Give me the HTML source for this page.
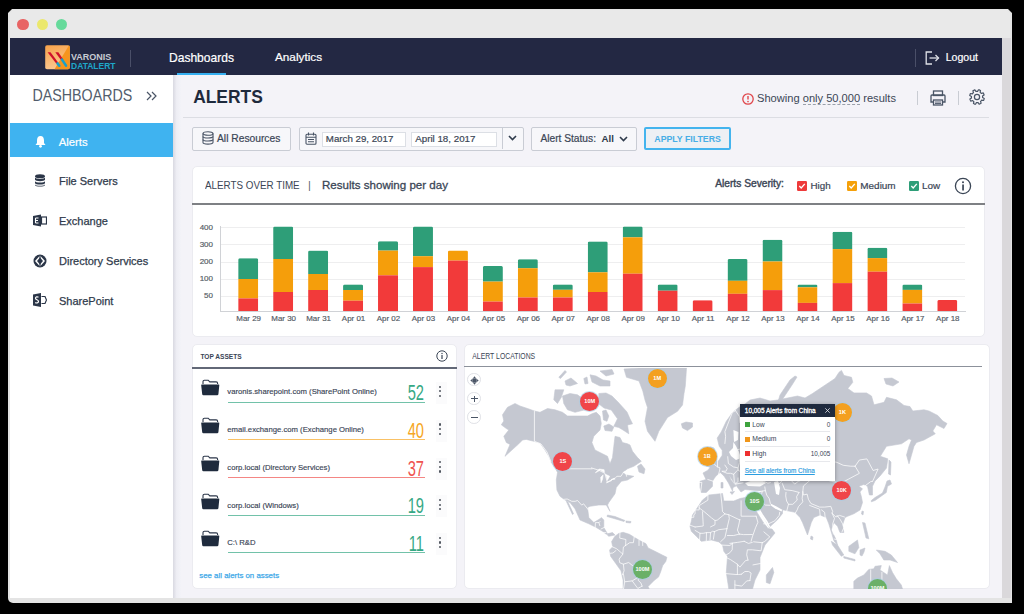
<!DOCTYPE html>
<html><head><meta charset="utf-8"><style>
html,body{margin:0;padding:0;}
body{width:1024px;height:614px;background:#000;position:relative;overflow:hidden;font-family:"Liberation Sans", sans-serif;}
.a{position:absolute;}
.t{position:absolute;white-space:nowrap;}
</style></head><body>
<div class="a" style="left:8px;top:9px;width:1004px;height:594px;background:#e4e4e4;border-radius:0 0 0 5px;clip-path:polygon(4px 0,1000px 0,1004px 4px,1004px 594px,0 594px,0 4px);"></div><div class="a" style="left:1002px;top:38px;width:9px;height:560px;background:#dad8db;"></div><div class="a" style="left:10px;top:10px;width:1000px;height:28px;background:#e9e9e9;clip-path:polygon(3px 0,997px 0,1000px 3px,1000px 28px,0 28px,0 3px);"></div><div class="a" style="left:17.4px;top:18.8px;width:11.6px;height:11.6px;border-radius:50%;background:#e86464;"></div><div class="a" style="left:36.6px;top:18.8px;width:11.6px;height:11.6px;border-radius:50%;background:#ebe86c;"></div><div class="a" style="left:55.7px;top:18.8px;width:11.6px;height:11.6px;border-radius:50%;background:#66da9b;"></div><div class="a" style="left:10px;top:38px;width:992px;height:37px;background:#232843;"></div><div class="a" style="left:10px;top:75px;width:992px;height:523px;background:#f4f3f8;"></div><div class="a" style="left:10px;top:75px;width:163px;height:523px;background:#ffffff;"></div><div class="a" style="left:173px;top:75px;width:8px;height:523px;background:linear-gradient(90deg,#d9d9e1,#eeeef4 45%,#f3f3f8);"></div><svg class="a" style="left:45px;top:45px" width="25" height="25" viewBox="0 0 25 25">
<defs><linearGradient id="lg" x1="0" y1="0" x2="0.3" y2="1"><stop offset="0" stop-color="#f7a24a"/><stop offset="1" stop-color="#fbc78e"/></linearGradient></defs>
<rect x="0.2" y="0.2" width="24.6" height="24" rx="1.8" fill="url(#lg)"/>
<path d="M23.9 0.5 L24.8 1.5 L24.8 22.5 Q24.8 24.2 23 24.2 L9.5 24.2 Z" fill="#f6951e"/>
<path d="M2.6 7.2 L5.5 7.2 L13.9 18.4 L11.2 18.4 Z" fill="#d0102a"/>
<path d="M10.3 7.2 L13.3 7.2 L18.4 14.5 L15.6 14.5 Z" fill="#d0102a"/>
<path d="M12.5 18.4 L14.3 20.7" stroke="#1ba0c8" stroke-width="2.6" stroke-linecap="round"/>
<path d="M17.0 14.6 L21.0 20.6" stroke="#1ba0c8" stroke-width="2.6" stroke-linecap="round"/>
</svg><div class="t " style="left:71.00px;top:52.98px;font-size:9.0px;line-height:9.0px;color:#c9cbd3;font-weight:bold;letter-spacing:0px;">VARONIS</div><div class="t " style="left:71.00px;top:61.80px;font-size:8.5px;line-height:8.5px;color:#1ea7c9;font-weight:bold;">DATALERT</div><div class="a" style="left:130px;top:50px;width:1px;height:17px;background:#4a4f68;"></div><div class="t " style="left:169.00px;top:51.79px;font-size:12.06px;line-height:12.06px;color:#ffffff;font-weight:normal;-webkit-text-stroke:0.2px #fff;">Dashboards</div><div class="a" style="left:177px;top:72.5px;width:49px;height:2.5px;background:#35aff0;"></div><div class="t " style="left:275.00px;top:51.25px;font-size:11.75px;line-height:11.75px;color:#ffffff;font-weight:normal;-webkit-text-stroke:0.2px #fff;">Analytics</div><div class="a" style="left:915px;top:49px;width:1px;height:18px;background:#4a4f68;"></div><svg class="a" style="left:925px;top:51px" width="15" height="14" viewBox="0 0 15 14" fill="none" stroke="#dfe1e8" stroke-width="1.3">
<path d="M7 1 H1.2 V13 H7"/><path d="M4.5 7 H13.5"/><path d="M10.5 4 L13.5 7 L10.5 10"/></svg><div class="t " style="left:945.70px;top:52.36px;font-size:10.56px;line-height:10.56px;color:#ffffff;font-weight:normal;-webkit-text-stroke:0.2px #fff;">Logout</div><div class="t " style="left:32.40px;top:89.41px;font-size:14.28px;line-height:14.28px;color:#525d6c;font-weight:normal;transform:scaleY(1.12);transform-origin:0 100%;">DASHBOARDS</div><svg class="a" style="left:146px;top:91px" width="11" height="10" viewBox="0 0 11 10" fill="none" stroke="#4a5566" stroke-width="1.2">
<path d="M1 1 L5 5 L1 9"/><path d="M6 1 L10 5 L6 9"/></svg><div class="a" style="left:10px;top:123px;width:163px;height:34px;background:#3fb3f0;"></div><svg class="a" style="left:34px;top:135px" width="13" height="13" viewBox="0 0 13 13"><path d="M6.5 1 C4 1 3 3 3 5.5 L3 8 L1.5 10 L11.5 10 L10 8 L10 5.5 C10 3 9 1 6.5 1 Z" fill="#fff"/><circle cx="6.5" cy="11.3" r="1.4" fill="#fff"/></svg><div class="t " style="left:58.70px;top:136.80px;font-size:11.34px;line-height:11.34px;color:#ffffff;font-weight:normal;-webkit-text-stroke:0.2px #fff;">Alerts</div><div class="t " style="left:59.00px;top:176.49px;font-size:11.0px;line-height:11.0px;color:#2f3b4c;font-weight:normal;-webkit-text-stroke:0.25px #2f3b4c;">File Servers</div><div class="t " style="left:59.00px;top:216.29px;font-size:11.0px;line-height:11.0px;color:#2f3b4c;font-weight:normal;-webkit-text-stroke:0.25px #2f3b4c;">Exchange</div><div class="t " style="left:59.00px;top:255.89px;font-size:11.0px;line-height:11.0px;color:#2f3b4c;font-weight:normal;-webkit-text-stroke:0.25px #2f3b4c;">Directory Services</div><div class="t " style="left:59.00px;top:295.69px;font-size:11.0px;line-height:11.0px;color:#2f3b4c;font-weight:normal;-webkit-text-stroke:0.25px #2f3b4c;">SharePoint</div><svg class="a" style="left:34px;top:174px" width="12" height="13" viewBox="0 0 12 13" fill="#2b3648">
<ellipse cx="6" cy="2.3" rx="5" ry="2"/><path d="M1 3.6 C1 5.5 11 5.5 11 3.6 V5.8 C11 7.6 1 7.6 1 5.8Z"/><path d="M1 7 C1 9 11 9 11 7 V9 C11 11 1 11 1 9Z"/><path d="M1 10.2 C1 12.2 11 12.2 11 10.2 V11 C11 13 1 13 1 11Z"/></svg><svg class="a" style="left:33px;top:214px" width="14" height="13" viewBox="0 0 14 13">
<path d="M0 2 L8 0.5 V12.5 L0 11 Z" fill="#2b3648"/><rect x="8.5" y="3" width="5" height="7" fill="none" stroke="#2b3648" stroke-width="1.2"/>
<path d="M2.5 4 H5.5 M2.5 6.5 H5 M2.5 9 H5.5 M2.5 4 V9" stroke="#fff" stroke-width="1.1"/></svg><svg class="a" style="left:33px;top:254px" width="14" height="14" viewBox="0 0 14 14">
<circle cx="7" cy="7" r="6.5" fill="#2b3648"/><path d="M7 1.5 L12 7 L7 12.5 L2 7 Z" fill="#fff"/><path d="M7 3.5 L10 7 L7 10.5 L4 7 Z" fill="#2b3648"/><path d="M7 1.5 V12.5" stroke="#2b3648" stroke-width="1.2"/></svg><svg class="a" style="left:33px;top:293px" width="14" height="14" viewBox="0 0 14 14">
<path d="M0 1.5 L8 0 V14 L0 12.5 Z" fill="#2b3648"/><path d="M8.5 3.5 L12 3.5 L13.5 7 L12 10.5 L8.5 10.5" fill="none" stroke="#2b3648" stroke-width="1.2"/>
<path d="M5.5 4.2 C4.5 3.5 2.5 3.6 2.5 5.2 C2.5 7 5.5 6.6 5.5 8.6 C5.5 10.2 3.3 10.3 2.3 9.5" fill="none" stroke="#fff" stroke-width="1.2"/></svg><div class="t " style="left:193.20px;top:89.07px;font-size:17.4px;line-height:17.4px;color:#1e2a3c;font-weight:bold;transform:scaleY(1.1);transform-origin:0 100%;">ALERTS</div><div class="a" style="left:183px;top:117px;width:806px;height:1px;background:#dcdde3;"></div><svg class="a" style="left:741.5px;top:92.5px" width="12" height="12" viewBox="0 0 12 12"><circle cx="6" cy="6" r="5.2" fill="none" stroke="#e0454a" stroke-width="1.3"/><path d="M6 3 V6.6" stroke="#e0454a" stroke-width="1.4"/><circle cx="6" cy="8.6" r="0.8" fill="#e0454a"/></svg><div class="t " style="left:757.00px;top:93.00px;font-size:11.11px;line-height:11.11px;color:#3b4656;font-weight:normal;">Showing <span style="border-bottom:1px dashed #9aa0aa">only 50,000</span> results</div><div class="a" style="left:917px;top:91px;width:1px;height:14px;background:#c9ccd3;"></div><svg class="a" style="left:930px;top:89.5px" width="16" height="16" viewBox="0 0 16 16" fill="none" stroke="#4a5566" stroke-width="1.3">
<rect x="3.5" y="1" width="9" height="4.5"/><path d="M3 12 H1 V6 Q1 5 2 5 H14 Q15 5 15 6 V12 H13"/><rect x="3.5" y="10" width="9" height="5"/><path d="M5 12 H11 M5 13.5 H11" stroke-width="0.9"/></svg><div class="a" style="left:958px;top:91px;width:1px;height:14px;background:#c9ccd3;"></div><svg class="a" style="left:969px;top:89px" width="16" height="16" viewBox="0 0 16 16" fill="none" stroke="#4a5566" stroke-width="1.2" stroke-linejoin="round">
<path d="M15.25 9.47 L15.07 10.17 L14.83 10.86 L14.51 11.51 L12.64 11.13 L12.32 11.57 L11.95 11.97 L11.54 12.34 L12.09 14.17 L11.46 14.54 L10.81 14.85 L10.12 15.09 L9.07 13.50 L8.53 13.58 L7.98 13.60 L7.43 13.57 L6.53 15.25 L5.83 15.07 L5.14 14.83 L4.49 14.51 L4.87 12.64 L4.43 12.32 L4.03 11.95 L3.66 11.54 L1.83 12.09 L1.46 11.46 L1.15 10.81 L0.91 10.12 L2.50 9.07 L2.42 8.53 L2.40 7.98 L2.43 7.43 L0.75 6.53 L0.93 5.83 L1.17 5.14 L1.49 4.49 L3.36 4.87 L3.68 4.43 L4.05 4.03 L4.46 3.66 L3.91 1.83 L4.54 1.46 L5.19 1.15 L5.88 0.91 L6.93 2.50 L7.47 2.42 L8.02 2.40 L8.57 2.43 L9.47 0.75 L10.17 0.93 L10.86 1.17 L11.51 1.49 L11.13 3.36 L11.57 3.68 L11.97 4.05 L12.34 4.46 L14.17 3.91 L14.54 4.54 L14.85 5.19 L15.09 5.88 L13.50 6.93 L13.58 7.47 L13.60 8.02 L13.57 8.57Z"/><circle cx="8" cy="8" r="2.6"/></svg><div class="a" style="left:191.5px;top:126.5px;width:97px;height:22px;border:1px solid #c9ccd4;background:#f7f7fa;border-radius:2px;"></div><svg class="a" style="left:202px;top:131px" width="12" height="14" viewBox="0 0 12 14" fill="none" stroke="#4a5566" stroke-width="1.1">
<ellipse cx="6" cy="2.5" rx="5" ry="1.8"/><path d="M1 2.5 V11.5 C1 13.6 11 13.6 11 11.5 V2.5"/><path d="M1 5.5 C1 7.5 11 7.5 11 5.5 M1 8.5 C1 10.5 11 10.5 11 8.5"/></svg><div class="t " style="left:217.00px;top:133.90px;font-size:10.28px;line-height:10.28px;color:#3b4656;font-weight:normal;-webkit-text-stroke:0.2px #3b4656;">All Resources</div><div class="a" style="left:298.5px;top:126.5px;width:223px;height:22px;border:1px solid #c9ccd4;background:#f7f7fa;border-radius:2px;"></div><svg class="a" style="left:305px;top:131.5px" width="12" height="13" viewBox="0 0 12 13" fill="none" stroke="#4a5566" stroke-width="1.1">
<rect x="1" y="2.2" width="10" height="10" rx="1"/><path d="M1 5.2 H11 M3.5 0.5 V3.5 M8.5 0.5 V3.5 M3 7.5 H9 M3 9.7 H9" /></svg><div class="a" style="left:321.5px;top:131.5px;width:82px;height:13px;border:1px solid #dcdfe5;background:#fff;"></div><div class="t " style="left:325.80px;top:134.16px;font-size:9.73px;line-height:9.73px;color:#3b4656;font-weight:normal;-webkit-text-stroke:0.2px #3b4656;">March 29, 2017</div><div class="a" style="left:411px;top:131.5px;width:84px;height:13px;border:1px solid #dcdfe5;background:#fff;"></div><div class="t " style="left:415.20px;top:134.13px;font-size:9.77px;line-height:9.77px;color:#3b4656;font-weight:normal;-webkit-text-stroke:0.2px #3b4656;">April 18, 2017</div><div class="a" style="left:502px;top:127px;width:1px;height:22px;background:#c9ccd4;"></div><svg class="a" style="left:507.5px;top:135px" width="9" height="6" viewBox="0 0 9 6" fill="none" stroke="#2f3b4c" stroke-width="1.6"><path d="M1 1 L4.5 4.5 L8 1"/></svg><div class="a" style="left:531px;top:126.5px;width:104px;height:22px;border:1px solid #c9ccd4;background:#f7f7fa;border-radius:2px;"></div><div class="t " style="left:540.40px;top:133.96px;font-size:10.21px;line-height:10.21px;color:#3b4656;font-weight:normal;-webkit-text-stroke:0.2px #3b4656;">Alert Status:</div><div class="t " style="left:601.60px;top:134.39px;font-size:9.7px;line-height:9.7px;color:#2f3b4c;font-weight:bold;">All</div><svg class="a" style="left:619px;top:135.5px" width="9" height="6" viewBox="0 0 9 6" fill="none" stroke="#2f3b4c" stroke-width="1.6"><path d="M1 1 L4.5 4.5 L8 1"/></svg><div class="a" style="left:644px;top:126.5px;width:83px;height:19px;border:2px solid #44b4ee;background:#edf0f4;border-radius:2px;"></div><div class="t " style="left:654.30px;top:135.17px;font-size:8.78px;line-height:8.78px;color:#47ade6;font-weight:bold;transform:scaleY(1.13);transform-origin:0 100%;">APPLY FILTERS</div><div class="a" style="left:191.5px;top:165.5px;width:793px;height:171px;border:1px solid #ebebf0;background:#fff;border-radius:5px;box-sizing:border-box;"></div><div class="t " style="left:205.00px;top:181.08px;font-size:9.83px;line-height:9.83px;color:#3b4656;font-weight:normal;transform:scaleY(1.2);transform-origin:0 100%;">ALERTS OVER TIME</div><div class="t " style="left:308.00px;top:180.09px;font-size:11px;line-height:11px;color:#5a6270;font-weight:normal;">|</div><div class="t " style="left:322.00px;top:179.61px;font-size:11.57px;line-height:11.57px;color:#3b4656;font-weight:normal;-webkit-text-stroke:0.3px #3b4656;">Results showing per day</div><div class="t " style="left:715.20px;top:179.34px;font-size:10.23px;line-height:10.23px;color:#3b4656;font-weight:normal;-webkit-text-stroke:0.4px #3b4656;">Alerts Severity:</div><svg class="a" style="left:796.7px;top:180.5px" width="10" height="10" viewBox="0 0 10 10"><rect x="0" y="0" width="10" height="10" rx="1.2" fill="#ee3a3a"/><path d="M2.3 5 L4.2 7 L7.8 2.8" fill="none" stroke="#fff" stroke-width="1.3"/></svg><svg class="a" style="left:846.5px;top:180.5px" width="10" height="10" viewBox="0 0 10 10"><rect x="0" y="0" width="10" height="10" rx="1.2" fill="#f5a00a"/><path d="M2.3 5 L4.2 7 L7.8 2.8" fill="none" stroke="#fff" stroke-width="1.3"/></svg><svg class="a" style="left:908.6px;top:180.5px" width="10" height="10" viewBox="0 0 10 10"><rect x="0" y="0" width="10" height="10" rx="1.2" fill="#2e9e78"/><path d="M2.3 5 L4.2 7 L7.8 2.8" fill="none" stroke="#fff" stroke-width="1.3"/></svg><div class="t " style="left:810.50px;top:180.70px;font-size:9.8px;line-height:9.8px;color:#3b4656;font-weight:normal;-webkit-text-stroke:0.2px #3b4656;">High</div><div class="t " style="left:860.30px;top:180.58px;font-size:9.95px;line-height:9.95px;color:#3b4656;font-weight:normal;-webkit-text-stroke:0.2px #3b4656;">Medium</div><div class="t " style="left:922.00px;top:180.62px;font-size:9.9px;line-height:9.9px;color:#3b4656;font-weight:normal;-webkit-text-stroke:0.2px #3b4656;">Low</div><svg class="a" style="left:954px;top:177px" width="18" height="18" viewBox="0 0 18 18"><circle cx="9" cy="9" r="7.6" fill="none" stroke="#3b4656" stroke-width="1.3"/><rect x="8.2" y="7.5" width="1.7" height="6" fill="#3b4656"/><circle cx="9" cy="5.2" r="1" fill="#3b4656"/></svg><div class="a" style="left:192px;top:203.2px;width:793px;height:1.7px;background:#7e8084;"></div><div class="a" style="left:221px;top:227px;width:744px;height:1px;background:#eeeeef;"></div><div class="t " style="left:183.00px;width:30px;text-align:right;top:223.83px;font-size:8px;line-height:8px;color:#555c66;font-weight:normal;-webkit-text-stroke:0.18px #555c66;">400</div><div class="a" style="left:221px;top:244px;width:744px;height:1px;background:#eeeeef;"></div><div class="t " style="left:183.00px;width:30px;text-align:right;top:241.13px;font-size:8px;line-height:8px;color:#555c66;font-weight:normal;-webkit-text-stroke:0.18px #555c66;">300</div><div class="a" style="left:221px;top:262px;width:744px;height:1px;background:#eeeeef;"></div><div class="t " style="left:183.00px;width:30px;text-align:right;top:258.33px;font-size:8px;line-height:8px;color:#555c66;font-weight:normal;-webkit-text-stroke:0.18px #555c66;">200</div><div class="a" style="left:221px;top:279px;width:744px;height:1px;background:#eeeeef;"></div><div class="t " style="left:183.00px;width:30px;text-align:right;top:275.43px;font-size:8px;line-height:8px;color:#555c66;font-weight:normal;-webkit-text-stroke:0.18px #555c66;">100</div><div class="a" style="left:221px;top:296px;width:744px;height:1px;background:#eeeeef;"></div><div class="t " style="left:183.00px;width:30px;text-align:right;top:292.43px;font-size:8px;line-height:8px;color:#555c66;font-weight:normal;-webkit-text-stroke:0.18px #555c66;">50</div><div class="a" style="left:220px;top:226px;width:1px;height:86px;background:#d0d2d6;"></div><div class="a" style="left:220px;top:311px;width:746px;height:1px;background:#d0d2d6;"></div><svg class="a" style="left:0;top:0" width="1024" height="614" viewBox="0 0 1024 614"><clipPath id="c0"><rect x="238.20" y="258.20" width="20" height="55.80" rx="1.5"/></clipPath><g clip-path="url(#c0)"><rect x="238.20" y="258.20" width="20" height="20.80" fill="#2e9e78"/><rect x="238.20" y="279.00" width="20" height="19.40" fill="#f59e0b"/><rect x="238.20" y="298.40" width="20" height="12.60" fill="#f23a3a"/></g><clipPath id="c1"><rect x="273.15" y="226.50" width="20" height="87.50" rx="1.5"/></clipPath><g clip-path="url(#c1)"><rect x="273.15" y="226.50" width="20" height="32.50" fill="#2e9e78"/><rect x="273.15" y="259.00" width="20" height="33.00" fill="#f59e0b"/><rect x="273.15" y="292.00" width="20" height="19.00" fill="#f23a3a"/></g><clipPath id="c2"><rect x="308.11" y="250.60" width="20" height="63.40" rx="1.5"/></clipPath><g clip-path="url(#c2)"><rect x="308.11" y="250.60" width="20" height="23.40" fill="#2e9e78"/><rect x="308.11" y="274.00" width="20" height="16.00" fill="#f59e0b"/><rect x="308.11" y="290.00" width="20" height="21.00" fill="#f23a3a"/></g><clipPath id="c3"><rect x="343.06" y="284.40" width="20" height="29.60" rx="1.5"/></clipPath><g clip-path="url(#c3)"><rect x="343.06" y="284.40" width="20" height="5.60" fill="#2e9e78"/><rect x="343.06" y="290.00" width="20" height="10.70" fill="#f59e0b"/><rect x="343.06" y="300.70" width="20" height="10.30" fill="#f23a3a"/></g><clipPath id="c4"><rect x="378.02" y="241.20" width="20" height="72.80" rx="1.5"/></clipPath><g clip-path="url(#c4)"><rect x="378.02" y="241.20" width="20" height="9.40" fill="#2e9e78"/><rect x="378.02" y="250.60" width="20" height="24.70" fill="#f59e0b"/><rect x="378.02" y="275.30" width="20" height="35.70" fill="#f23a3a"/></g><clipPath id="c5"><rect x="412.97" y="226.50" width="20" height="87.50" rx="1.5"/></clipPath><g clip-path="url(#c5)"><rect x="412.97" y="226.50" width="20" height="29.70" fill="#2e9e78"/><rect x="412.97" y="256.20" width="20" height="10.90" fill="#f59e0b"/><rect x="412.97" y="267.10" width="20" height="43.90" fill="#f23a3a"/></g><clipPath id="c6"><rect x="447.93" y="250.50" width="20" height="63.50" rx="1.5"/></clipPath><g clip-path="url(#c6)"><rect x="447.93" y="250.50" width="20" height="10.10" fill="#f59e0b"/><rect x="447.93" y="260.60" width="20" height="50.40" fill="#f23a3a"/></g><clipPath id="c7"><rect x="482.88" y="266.00" width="20" height="48.00" rx="1.5"/></clipPath><g clip-path="url(#c7)"><rect x="482.88" y="266.00" width="20" height="15.60" fill="#2e9e78"/><rect x="482.88" y="281.60" width="20" height="20.00" fill="#f59e0b"/><rect x="482.88" y="301.60" width="20" height="9.40" fill="#f23a3a"/></g><clipPath id="c8"><rect x="517.84" y="259.20" width="20" height="54.80" rx="1.5"/></clipPath><g clip-path="url(#c8)"><rect x="517.84" y="259.20" width="20" height="9.00" fill="#2e9e78"/><rect x="517.84" y="268.20" width="20" height="29.30" fill="#f59e0b"/><rect x="517.84" y="297.50" width="20" height="13.50" fill="#f23a3a"/></g><clipPath id="c9"><rect x="552.79" y="284.40" width="20" height="29.60" rx="1.5"/></clipPath><g clip-path="url(#c9)"><rect x="552.79" y="284.40" width="20" height="5.40" fill="#2e9e78"/><rect x="552.79" y="289.80" width="20" height="7.70" fill="#f59e0b"/><rect x="552.79" y="297.50" width="20" height="13.50" fill="#f23a3a"/></g><clipPath id="c10"><rect x="587.75" y="241.40" width="20" height="72.60" rx="1.5"/></clipPath><g clip-path="url(#c10)"><rect x="587.75" y="241.40" width="20" height="30.90" fill="#2e9e78"/><rect x="587.75" y="272.30" width="20" height="19.70" fill="#f59e0b"/><rect x="587.75" y="292.00" width="20" height="19.00" fill="#f23a3a"/></g><clipPath id="c11"><rect x="622.70" y="226.40" width="20" height="87.60" rx="1.5"/></clipPath><g clip-path="url(#c11)"><rect x="622.70" y="226.40" width="20" height="10.90" fill="#2e9e78"/><rect x="622.70" y="237.30" width="20" height="36.40" fill="#f59e0b"/><rect x="622.70" y="273.70" width="20" height="37.30" fill="#f23a3a"/></g><clipPath id="c12"><rect x="657.66" y="284.40" width="20" height="29.60" rx="1.5"/></clipPath><g clip-path="url(#c12)"><rect x="657.66" y="284.40" width="20" height="6.30" fill="#2e9e78"/><rect x="657.66" y="290.70" width="20" height="20.30" fill="#f23a3a"/></g><clipPath id="c13"><rect x="692.62" y="300.20" width="20" height="13.80" rx="1.5"/></clipPath><g clip-path="url(#c13)"><rect x="692.62" y="300.20" width="20" height="10.80" fill="#f23a3a"/></g><clipPath id="c14"><rect x="727.57" y="259.00" width="20" height="55.00" rx="1.5"/></clipPath><g clip-path="url(#c14)"><rect x="727.57" y="259.00" width="20" height="21.80" fill="#2e9e78"/><rect x="727.57" y="280.80" width="20" height="13.00" fill="#f59e0b"/><rect x="727.57" y="293.80" width="20" height="17.20" fill="#f23a3a"/></g><clipPath id="c15"><rect x="762.52" y="239.70" width="20" height="74.30" rx="1.5"/></clipPath><g clip-path="url(#c15)"><rect x="762.52" y="239.70" width="20" height="21.80" fill="#2e9e78"/><rect x="762.52" y="261.50" width="20" height="28.60" fill="#f59e0b"/><rect x="762.52" y="290.10" width="20" height="20.90" fill="#f23a3a"/></g><clipPath id="c16"><rect x="797.48" y="284.50" width="20" height="29.50" rx="1.5"/></clipPath><g clip-path="url(#c16)"><rect x="797.48" y="284.50" width="20" height="2.80" fill="#2e9e78"/><rect x="797.48" y="287.30" width="20" height="15.60" fill="#f59e0b"/><rect x="797.48" y="302.90" width="20" height="8.10" fill="#f23a3a"/></g><clipPath id="c17"><rect x="832.43" y="231.80" width="20" height="82.20" rx="1.5"/></clipPath><g clip-path="url(#c17)"><rect x="832.43" y="231.80" width="20" height="17.30" fill="#2e9e78"/><rect x="832.43" y="249.10" width="20" height="34.00" fill="#f59e0b"/><rect x="832.43" y="283.10" width="20" height="27.90" fill="#f23a3a"/></g><clipPath id="c18"><rect x="867.39" y="247.70" width="20" height="66.30" rx="1.5"/></clipPath><g clip-path="url(#c18)"><rect x="867.39" y="247.70" width="20" height="10.40" fill="#2e9e78"/><rect x="867.39" y="258.10" width="20" height="13.60" fill="#f59e0b"/><rect x="867.39" y="271.70" width="20" height="39.30" fill="#f23a3a"/></g><clipPath id="c19"><rect x="902.35" y="284.50" width="20" height="29.50" rx="1.5"/></clipPath><g clip-path="url(#c19)"><rect x="902.35" y="284.50" width="20" height="5.40" fill="#2e9e78"/><rect x="902.35" y="289.90" width="20" height="13.60" fill="#f59e0b"/><rect x="902.35" y="303.50" width="20" height="7.50" fill="#f23a3a"/></g><clipPath id="c20"><rect x="937.30" y="300.00" width="20" height="14.00" rx="1.5"/></clipPath><g clip-path="url(#c20)"><rect x="937.30" y="300.00" width="20" height="11.00" fill="#f23a3a"/></g></svg><div class="t " style="left:228.70px;width:40px;text-align:center;top:314.57px;font-size:7.95px;line-height:7.95px;color:#555c66;font-weight:normal;-webkit-text-stroke:0.18px #555c66;">Mar 29</div><div class="t " style="left:263.65px;width:40px;text-align:center;top:314.57px;font-size:7.95px;line-height:7.95px;color:#555c66;font-weight:normal;-webkit-text-stroke:0.18px #555c66;">Mar 30</div><div class="t " style="left:298.61px;width:40px;text-align:center;top:314.57px;font-size:7.95px;line-height:7.95px;color:#555c66;font-weight:normal;-webkit-text-stroke:0.18px #555c66;">Mar 31</div><div class="t " style="left:333.56px;width:40px;text-align:center;top:314.57px;font-size:7.95px;line-height:7.95px;color:#555c66;font-weight:normal;-webkit-text-stroke:0.18px #555c66;">Apr 01</div><div class="t " style="left:368.52px;width:40px;text-align:center;top:314.57px;font-size:7.95px;line-height:7.95px;color:#555c66;font-weight:normal;-webkit-text-stroke:0.18px #555c66;">Apr 02</div><div class="t " style="left:403.47px;width:40px;text-align:center;top:314.57px;font-size:7.95px;line-height:7.95px;color:#555c66;font-weight:normal;-webkit-text-stroke:0.18px #555c66;">Apr 03</div><div class="t " style="left:438.43px;width:40px;text-align:center;top:314.57px;font-size:7.95px;line-height:7.95px;color:#555c66;font-weight:normal;-webkit-text-stroke:0.18px #555c66;">Apr 04</div><div class="t " style="left:473.38px;width:40px;text-align:center;top:314.57px;font-size:7.95px;line-height:7.95px;color:#555c66;font-weight:normal;-webkit-text-stroke:0.18px #555c66;">Apr 05</div><div class="t " style="left:508.34px;width:40px;text-align:center;top:314.57px;font-size:7.95px;line-height:7.95px;color:#555c66;font-weight:normal;-webkit-text-stroke:0.18px #555c66;">Apr 06</div><div class="t " style="left:543.29px;width:40px;text-align:center;top:314.57px;font-size:7.95px;line-height:7.95px;color:#555c66;font-weight:normal;-webkit-text-stroke:0.18px #555c66;">Apr 07</div><div class="t " style="left:578.25px;width:40px;text-align:center;top:314.57px;font-size:7.95px;line-height:7.95px;color:#555c66;font-weight:normal;-webkit-text-stroke:0.18px #555c66;">Apr 08</div><div class="t " style="left:613.20px;width:40px;text-align:center;top:314.57px;font-size:7.95px;line-height:7.95px;color:#555c66;font-weight:normal;-webkit-text-stroke:0.18px #555c66;">Apr 09</div><div class="t " style="left:648.16px;width:40px;text-align:center;top:314.57px;font-size:7.95px;line-height:7.95px;color:#555c66;font-weight:normal;-webkit-text-stroke:0.18px #555c66;">Apr 10</div><div class="t " style="left:683.12px;width:40px;text-align:center;top:314.57px;font-size:7.95px;line-height:7.95px;color:#555c66;font-weight:normal;-webkit-text-stroke:0.18px #555c66;">Apr 11</div><div class="t " style="left:718.07px;width:40px;text-align:center;top:314.57px;font-size:7.95px;line-height:7.95px;color:#555c66;font-weight:normal;-webkit-text-stroke:0.18px #555c66;">Apr 12</div><div class="t " style="left:753.02px;width:40px;text-align:center;top:314.57px;font-size:7.95px;line-height:7.95px;color:#555c66;font-weight:normal;-webkit-text-stroke:0.18px #555c66;">Apr 13</div><div class="t " style="left:787.98px;width:40px;text-align:center;top:314.57px;font-size:7.95px;line-height:7.95px;color:#555c66;font-weight:normal;-webkit-text-stroke:0.18px #555c66;">Apr 14</div><div class="t " style="left:822.93px;width:40px;text-align:center;top:314.57px;font-size:7.95px;line-height:7.95px;color:#555c66;font-weight:normal;-webkit-text-stroke:0.18px #555c66;">Apr 15</div><div class="t " style="left:857.89px;width:40px;text-align:center;top:314.57px;font-size:7.95px;line-height:7.95px;color:#555c66;font-weight:normal;-webkit-text-stroke:0.18px #555c66;">Apr 16</div><div class="t " style="left:892.85px;width:40px;text-align:center;top:314.57px;font-size:7.95px;line-height:7.95px;color:#555c66;font-weight:normal;-webkit-text-stroke:0.18px #555c66;">Apr 17</div><div class="t " style="left:927.80px;width:40px;text-align:center;top:314.57px;font-size:7.95px;line-height:7.95px;color:#555c66;font-weight:normal;-webkit-text-stroke:0.18px #555c66;">Apr 18</div><div class="a" style="left:192px;top:343.5px;width:265px;height:245px;border:1px solid #ebebf0;background:#fff;border-radius:5px;box-sizing:border-box;"></div><div class="t " style="left:200.40px;top:354.01px;font-size:6.6px;line-height:6.6px;color:#3a4556;font-weight:bold;transform:scaleY(1.2);transform-origin:0 100%;">TOP ASSETS</div><svg class="a" style="left:436px;top:350px" width="12" height="12" viewBox="0 0 12 12"><circle cx="6" cy="6" r="5.2" fill="none" stroke="#3b4656" stroke-width="1"/><rect x="5.4" y="5" width="1.2" height="4" fill="#3b4656"/><circle cx="6" cy="3.5" r="0.7" fill="#3b4656"/></svg><div class="a" style="left:192px;top:367.2px;width:265px;height:1.7px;background:#626877;"></div><svg class="a" style="left:200.8px;top:379.10px" width="19" height="17" viewBox="0 0 19 17"><path d="M2 5 V2.6 Q2 1.2 3.4 1.2 H7.2 L8.8 2.9 H15.2 Q16.6 2.9 16.6 4.3 V5" fill="none" stroke="#2a3548" stroke-width="1.1"/><path d="M0.4 5.6 H17.8 Q18.4 5.6 18.3 6.3 L17.4 15.3 Q17.2 16.3 16.2 16.3 H2.4 Q1.4 16.3 1.2 15.3 L0.2 6.3 Q0.1 5.6 0.7 5.6Z" fill="#1f2b3d"/></svg><div class="t " style="left:227.30px;top:388.27px;font-size:7.71px;line-height:7.71px;color:#3a4556;font-weight:normal;-webkit-text-stroke:0.15px #3a4556;">varonis.sharepoint.com (SharePoint Online)</div><div class="a" style="left:436px;top:382px;width:11px;height:22px;background:#fbfbfc;"></div><div class="t " style="left:383.60px;width:40px;text-align:right;top:381.92px;font-size:21.6px;line-height:21.6px;color:#36a884;font-weight:normal;transform:scaleX(0.68);transform-origin:100% 50%;">52</div><div class="a" style="left:228px;top:401.70px;width:197px;height:1.1px;background:#36a884;opacity:0.7;"></div><div class="a" style="left:438.6px;top:385.60px;width:2.3px;height:2.3px;border-radius:50%;background:#50565f;"></div><div class="a" style="left:438.6px;top:390.20px;width:2.3px;height:2.3px;border-radius:50%;background:#50565f;"></div><div class="a" style="left:438.6px;top:394.80px;width:2.3px;height:2.3px;border-radius:50%;background:#50565f;"></div><svg class="a" style="left:200.8px;top:416.90px" width="19" height="17" viewBox="0 0 19 17"><path d="M2 5 V2.6 Q2 1.2 3.4 1.2 H7.2 L8.8 2.9 H15.2 Q16.6 2.9 16.6 4.3 V5" fill="none" stroke="#2a3548" stroke-width="1.1"/><path d="M0.4 5.6 H17.8 Q18.4 5.6 18.3 6.3 L17.4 15.3 Q17.2 16.3 16.2 16.3 H2.4 Q1.4 16.3 1.2 15.3 L0.2 6.3 Q0.1 5.6 0.7 5.6Z" fill="#1f2b3d"/></svg><div class="t " style="left:227.30px;top:426.07px;font-size:7.71px;line-height:7.71px;color:#3a4556;font-weight:normal;-webkit-text-stroke:0.15px #3a4556;">email.exchange.com (Exchange Online)</div><div class="a" style="left:436px;top:420px;width:11px;height:22px;background:#fbfbfc;"></div><div class="t " style="left:383.60px;width:40px;text-align:right;top:419.72px;font-size:21.6px;line-height:21.6px;color:#f6a623;font-weight:normal;transform:scaleX(0.68);transform-origin:100% 50%;">40</div><div class="a" style="left:228px;top:439.30px;width:197px;height:1.1px;background:#f6a623;opacity:0.7;"></div><div class="a" style="left:438.6px;top:423.40px;width:2.3px;height:2.3px;border-radius:50%;background:#50565f;"></div><div class="a" style="left:438.6px;top:428.00px;width:2.3px;height:2.3px;border-radius:50%;background:#50565f;"></div><div class="a" style="left:438.6px;top:432.60px;width:2.3px;height:2.3px;border-radius:50%;background:#50565f;"></div><svg class="a" style="left:200.8px;top:454.70px" width="19" height="17" viewBox="0 0 19 17"><path d="M2 5 V2.6 Q2 1.2 3.4 1.2 H7.2 L8.8 2.9 H15.2 Q16.6 2.9 16.6 4.3 V5" fill="none" stroke="#2a3548" stroke-width="1.1"/><path d="M0.4 5.6 H17.8 Q18.4 5.6 18.3 6.3 L17.4 15.3 Q17.2 16.3 16.2 16.3 H2.4 Q1.4 16.3 1.2 15.3 L0.2 6.3 Q0.1 5.6 0.7 5.6Z" fill="#1f2b3d"/></svg><div class="t " style="left:227.30px;top:463.87px;font-size:7.71px;line-height:7.71px;color:#3a4556;font-weight:normal;-webkit-text-stroke:0.15px #3a4556;">corp.local (Directory Services)</div><div class="a" style="left:436px;top:458px;width:11px;height:22px;background:#fbfbfc;"></div><div class="t " style="left:383.60px;width:40px;text-align:right;top:457.52px;font-size:21.6px;line-height:21.6px;color:#ef5350;font-weight:normal;transform:scaleX(0.68);transform-origin:100% 50%;">37</div><div class="a" style="left:228px;top:476.90px;width:197px;height:1.1px;background:#ef5350;opacity:0.7;"></div><div class="a" style="left:438.6px;top:461.20px;width:2.3px;height:2.3px;border-radius:50%;background:#50565f;"></div><div class="a" style="left:438.6px;top:465.80px;width:2.3px;height:2.3px;border-radius:50%;background:#50565f;"></div><div class="a" style="left:438.6px;top:470.40px;width:2.3px;height:2.3px;border-radius:50%;background:#50565f;"></div><svg class="a" style="left:200.8px;top:492.50px" width="19" height="17" viewBox="0 0 19 17"><path d="M2 5 V2.6 Q2 1.2 3.4 1.2 H7.2 L8.8 2.9 H15.2 Q16.6 2.9 16.6 4.3 V5" fill="none" stroke="#2a3548" stroke-width="1.1"/><path d="M0.4 5.6 H17.8 Q18.4 5.6 18.3 6.3 L17.4 15.3 Q17.2 16.3 16.2 16.3 H2.4 Q1.4 16.3 1.2 15.3 L0.2 6.3 Q0.1 5.6 0.7 5.6Z" fill="#1f2b3d"/></svg><div class="t " style="left:227.30px;top:501.67px;font-size:7.71px;line-height:7.71px;color:#3a4556;font-weight:normal;-webkit-text-stroke:0.15px #3a4556;">corp.local (Windows)</div><div class="a" style="left:436px;top:495px;width:11px;height:22px;background:#fbfbfc;"></div><div class="t " style="left:383.60px;width:40px;text-align:right;top:495.32px;font-size:21.6px;line-height:21.6px;color:#36a884;font-weight:normal;transform:scaleX(0.68);transform-origin:100% 50%;">19</div><div class="a" style="left:228px;top:514.50px;width:197px;height:1.1px;background:#36a884;opacity:0.7;"></div><div class="a" style="left:438.6px;top:499.00px;width:2.3px;height:2.3px;border-radius:50%;background:#50565f;"></div><div class="a" style="left:438.6px;top:503.60px;width:2.3px;height:2.3px;border-radius:50%;background:#50565f;"></div><div class="a" style="left:438.6px;top:508.20px;width:2.3px;height:2.3px;border-radius:50%;background:#50565f;"></div><svg class="a" style="left:200.8px;top:530.30px" width="19" height="17" viewBox="0 0 19 17"><path d="M2 5 V2.6 Q2 1.2 3.4 1.2 H7.2 L8.8 2.9 H15.2 Q16.6 2.9 16.6 4.3 V5" fill="none" stroke="#2a3548" stroke-width="1.1"/><path d="M0.4 5.6 H17.8 Q18.4 5.6 18.3 6.3 L17.4 15.3 Q17.2 16.3 16.2 16.3 H2.4 Q1.4 16.3 1.2 15.3 L0.2 6.3 Q0.1 5.6 0.7 5.6Z" fill="#1f2b3d"/></svg><div class="t " style="left:227.30px;top:539.47px;font-size:7.71px;line-height:7.71px;color:#3a4556;font-weight:normal;-webkit-text-stroke:0.15px #3a4556;">C:\ R&amp;D</div><div class="a" style="left:436px;top:533px;width:11px;height:22px;background:#fbfbfc;"></div><div class="t " style="left:383.60px;width:40px;text-align:right;top:533.12px;font-size:21.6px;line-height:21.6px;color:#36a884;font-weight:normal;transform:scaleX(0.68);transform-origin:100% 50%;">11</div><div class="a" style="left:228px;top:552.10px;width:197px;height:1.1px;background:#36a884;opacity:0.7;"></div><div class="a" style="left:438.6px;top:536.80px;width:2.3px;height:2.3px;border-radius:50%;background:#50565f;"></div><div class="a" style="left:438.6px;top:541.40px;width:2.3px;height:2.3px;border-radius:50%;background:#50565f;"></div><div class="a" style="left:438.6px;top:546.00px;width:2.3px;height:2.3px;border-radius:50%;background:#50565f;"></div><div class="t " style="left:199.30px;top:571.95px;font-size:7.85px;line-height:7.85px;color:#3fa9e8;font-weight:normal;-webkit-text-stroke:0.25px #3fa9e8;">see all alerts on assets</div><div class="a" style="left:463.5px;top:343.5px;width:526px;height:245px;border:1px solid #ebebf0;background:#fff;border-radius:5px;box-sizing:border-box;overflow:hidden;"></div><div class="t " style="left:472.30px;top:353.79px;font-size:6.86px;line-height:6.86px;color:#3a4556;font-weight:normal;transform:scaleY(1.2);transform-origin:0 100%;">ALERT LOCATIONS</div><div class="a" style="left:464px;top:365.8px;width:518px;height:1.5px;background:#8c919b;"></div><svg class="a" style="left:464px;top:368px" width="525" height="221" viewBox="464 368 525 221"><g fill="#c5c8d1" stroke="#c5c8d1" stroke-width="0.6" stroke-linejoin="round"><path d="M502.5 414.8 L507.5 407.3 L515.0 403.5 L520.0 406.0 L527.5 408.5 L534.4 411.0 L540.0 412.3 L547.5 408.5 L555.0 409.8 L562.5 412.3 L567.5 416.0 L577.5 416.0 L587.5 416.0 L592.5 413.5 L596.3 412.3 L600.0 416.0 L601.3 423.5 L600.0 430.0 L593.8 436.3 L591.9 442.5 L595.0 450.0 L602.5 453.8 L607.5 456.3 L610.0 463.8 L612.5 457.5 L613.8 446.3 L615.0 436.3 L620.0 437.5 L622.5 442.5 L627.5 443.8 L630.0 445.0 L632.5 451.3 L637.5 457.5 L641.3 461.3 L633.8 466.3 L627.5 468.8 L622.5 472.5 L626.3 475.0 L633.8 476.3 L627.5 480.0 L621.3 481.3 L616.3 487.5 L615.0 493.8 L608.8 502.5 L607.5 505.0 L610.0 511.3 L606.3 505.0 L598.8 505.0 L590.0 506.3 L587.5 507.5 L588.8 517.5 L593.8 522.5 L600.0 518.8 L601.3 517.5 L603.8 520.0 L603.8 527.5 L607.5 533.8 L612.5 532.5 L615.0 535.0 L608.8 536.3 L602.5 531.3 L596.3 527.5 L588.8 523.8 L580.0 520.0 L575.0 508.8 L570.0 502.5 L565.0 500.0 L560.0 496.3 L556.9 490.0 L556.3 480.0 L557.5 472.5 L555.0 467.5 L551.3 462.5 L548.8 456.3 L545.0 450.0 L540.0 443.1 L533.8 441.3 L526.3 439.4 L522.5 440.0 L518.8 443.8 L505.0 456.3 L510.0 444.4 L506.3 442.5 L503.8 436.3 L508.8 430.0 L506.3 428.5 L501.3 424.8 L503.8 421.0Z"/><path d="M566.3 501.3 L568.0 502.0 L573.5 513.8 L572.5 514.5Z"/><path d="M637.5 466.3 L641.0 464.0 L645.0 469.0 L644.0 473.8 L639.0 472.0Z"/><path d="M602.5 411.0 L606.0 410.0 L608.8 416.0 L607.0 421.3 L603.5 420.0Z"/><path d="M603.8 426.0 L609.0 424.0 L613.8 427.0 L612.0 431.3 L605.0 430.5Z"/><path d="M624.0 369.0 L639.0 368.0 L686.5 368.0 L685.3 386.0 L684.0 393.5 L682.5 405.0 L677.5 411.3 L667.5 417.5 L658.8 431.3 L655.0 441.3 L647.5 431.3 L645.0 421.3 L647.5 407.5 L645.0 400.0 L642.8 391.0 L639.0 381.0 L626.5 377.3Z"/><path d="M681.3 423.8 L686.0 422.0 L692.5 423.0 L692.5 427.0 L687.5 430.6 L682.5 428.0Z"/><path d="M555.0 389.8 L563.8 389.8 L561.3 397.3 L557.5 403.5 L553.8 399.8Z"/><path d="M562.5 396.0 L570.0 393.5 L577.5 394.8 L582.5 398.5 L585.0 409.8 L575.0 412.3 L567.5 409.8 L563.8 403.5Z"/><path d="M558.8 377.3 L565.0 370.5 L566.5 372.0 L560.5 378.5Z"/><path d="M565.0 381.0 L571.0 378.0 L577.5 383.5 L570.0 386.0 L566.0 385.0Z"/><path d="M583.8 378.5 L587.0 377.0 L588.0 383.5 L585.0 384.0Z"/><path d="M590.0 374.8 L596.0 376.0 L603.0 380.0 L610.0 381.0 L610.0 386.0 L600.0 386.0 L592.0 382.0Z"/><path d="M600.0 371.0 L612.0 369.5 L614.0 374.0 L606.0 376.0Z"/><path d="M598.8 393.5 L606.0 393.0 L612.0 396.0 L618.0 402.0 L622.5 407.0 L627.0 412.0 L630.0 418.8 L632.5 423.8 L627.5 425.0 L628.8 433.8 L623.0 430.0 L618.8 427.5 L613.8 426.3 L617.5 418.8 L611.3 410.0 L604.0 408.0 L599.0 404.0Z"/><path d="M607.5 515.0 L615.0 516.5 L625.0 520.5 L624.0 521.5 L614.0 518.5 L607.0 516.5Z"/><path d="M626.0 521.0 L631.0 521.5 L630.5 523.0 L626.0 522.5Z"/><path d="M614.8 536.4 L618.9 533.3 L623.1 532.3 L629.4 534.3 L634.6 537.5 L639.8 540.6 L646.0 543.7 L648.1 547.9 L654.4 551.0 L662.7 555.2 L666.9 557.3 L665.8 561.4 L662.7 565.6 L660.6 571.9 L658.5 577.1 L654.4 580.2 L648.1 586.5 L649.2 589.0 L623.1 589.0 L623.1 580.2 L621.0 570.8 L615.8 563.5 L610.6 556.2 L609.6 550.0 L612.7 546.8 L611.6 541.6Z"/><path d="M700.0 487.5 L700.0 481.3 L706.0 479.5 L703.0 473.0 L707.5 470.4 L711.1 466.3 L718.2 461.3 L722.2 455.2 L722.2 450.2 L719.2 446.2 L717.2 438.1 L721.2 432.0 L726.3 421.3 L732.5 412.5 L738.8 407.5 L745.0 404.0 L750.0 400.0 L760.0 398.0 L770.0 401.0 L777.5 400.0 L797.5 396.0 L805.0 398.0 L812.5 393.5 L820.0 388.5 L835.0 378.5 L839.0 372.3 L841.5 370.4 L844.0 375.4 L851.5 377.3 L852.8 382.3 L847.8 388.5 L854.0 392.9 L866.5 392.9 L871.5 396.0 L874.0 404.8 L884.0 402.3 L886.5 397.3 L896.5 399.8 L904.0 405.4 L910.0 406.6 L912.8 411.0 L924.0 409.8 L929.0 411.0 L937.8 415.5 L942.8 421.0 L947.0 423.5 L944.0 428.5 L936.5 424.8 L932.8 431.0 L935.3 433.8 L924.0 440.0 L916.5 442.5 L914.0 446.3 L909.0 463.8 L906.5 455.0 L909.0 446.3 L911.5 440.0 L909.0 438.8 L901.5 443.8 L886.5 446.3 L880.3 456.3 L887.8 458.8 L886.5 468.0 L880.0 476.0 L875.0 481.0 L872.5 486.3 L872.5 495.0 L869.4 495.0 L867.5 486.3 L863.8 484.5 L858.8 486.3 L862.5 488.8 L860.0 491.9 L861.3 496.3 L862.5 502.5 L860.0 510.0 L853.8 513.8 L847.5 516.3 L845.0 517.5 L842.5 525.0 L843.8 532.5 L840.0 532.5 L837.5 526.3 L833.8 522.5 L831.3 530.0 L836.3 540.0 L837.5 545.0 L834.0 541.0 L828.8 523.8 L826.3 517.5 L820.0 515.0 L813.8 517.5 L811.3 522.5 L807.5 535.0 L802.5 522.5 L800.0 517.5 L795.0 512.3 L782.5 509.8 L782.5 513.5 L777.5 519.8 L769.0 527.5 L766.0 521.0 L761.0 513.0 L756.0 505.0 L753.0 499.0 L752.0 497.5 L758.0 494.0 L762.0 491.0 L750.0 490.0 L745.0 489.5 L741.0 492.0 L738.0 488.0 L733.0 481.0 L729.0 475.0 L731.0 480.0 L736.0 486.0 L733.0 487.5 L732.5 491.0 L728.5 483.0 L724.0 476.0 L720.2 472.4 L716.0 476.0 L714.2 478.5 L712.5 481.3 L712.5 486.3 L706.3 492.5 L701.3 492.5Z"/><path d="M705.0 452.0 L710.0 447.0 L714.0 448.0 L716.0 458.0 L718.0 466.0 L712.0 468.0 L706.0 466.0 L708.0 458.0Z"/><path d="M700.0 457.0 L705.0 455.0 L706.0 462.0 L701.0 464.0Z"/><path d="M708.8 495.0 L702.5 500.0 L697.5 507.5 L692.5 515.0 L691.3 521.3 L690.0 526.3 L691.3 531.3 L696.3 536.3 L701.3 541.3 L711.3 540.0 L718.8 541.9 L722.5 545.0 L723.8 551.3 L727.5 556.3 L726.3 572.5 L728.8 589.0 L752.5 589.0 L755.0 580.0 L760.0 570.0 L760.0 557.5 L765.0 545.0 L775.0 533.0 L772.0 529.0 L768.0 528.5 L763.0 522.0 L758.0 514.0 L752.5 505.0 L748.0 500.0 L746.3 497.3 L740.0 498.5 L733.8 501.0 L723.8 501.0 L722.5 493.5Z"/><path d="M772.5 567.5 L773.8 572.5 L770.0 583.8 L766.3 582.5 L766.3 575.0Z"/><path d="M853.8 589.0 L853.8 581.3 L857.5 578.1 L863.8 575.0 L868.8 569.4 L873.8 568.8 L875.0 566.3 L881.3 565.6 L880.0 570.0 L887.5 575.0 L889.4 565.6 L892.5 572.5 L896.3 578.8 L901.3 585.0 L902.5 589.0Z"/><path d="M831.3 541.3 L837.5 545.0 L843.8 555.0 L841.3 556.3 L832.5 545.0Z"/><path d="M843.8 556.5 L855.0 559.5 L855.0 561.0 L843.8 558.0Z"/><path d="M848.8 546.3 L857.5 540.0 L858.8 547.5 L855.0 553.8 L848.8 551.3Z"/><path d="M860.0 550.0 L865.0 548.0 L864.0 552.0 L862.0 556.0 L860.0 555.0Z"/><path d="M876.3 550.0 L885.0 551.3 L891.3 555.0 L897.5 562.5 L890.0 560.0 L883.8 560.0 L880.0 553.8Z"/><path d="M890.0 480.0 L891.5 484.0 L887.5 486.3 L886.3 492.5 L880.0 497.0 L875.0 500.5 L871.3 501.8 L871.3 500.5 L875.0 497.5 L882.5 493.0 L885.0 487.0 L887.0 481.0Z"/><path d="M889.0 460.0 L891.0 462.0 L890.5 475.0 L888.5 474.0Z"/><path d="M862.5 522.5 L865.0 523.0 L868.8 538.8 L866.0 538.0Z"/><path d="M795.0 376.0 L790.0 380.0 L780.0 395.0 L777.5 403.5 L782.0 400.0 L792.0 385.0 L797.0 377.0Z"/><path d="M884.0 378.5 L892.0 378.0 L899.0 382.0 L893.0 386.0 L886.0 384.0Z"/><path d="M862.0 511.0 L863.5 511.5 L863.0 515.0 L861.5 514.0Z"/><path d="M730.0 492.0 L734.5 491.5 L732.0 494.5Z"/><path d="M721.0 482.5 L723.0 482.5 L723.0 488.0 L721.0 488.0Z"/><path d="M811.0 536.0 L813.0 537.0 L812.5 540.0 L810.5 539.0Z"/></g><g fill="#fff"><path d="M733.4 442.0 L736.0 446.0 L739.0 452.0 L741.0 458.0 L736.0 460.0 L731.0 456.0 L729.0 452.0 L733.0 448.0Z"/><path d="M733.4 430.0 L738.4 432.0 L738.0 440.0 L734.0 442.0Z"/><path d="M745.0 483.0 L752.0 480.5 L762.0 480.5 L766.0 483.0 L760.0 486.5 L748.0 486.0Z"/><path d="M774.0 482.0 L778.0 481.0 L780.0 488.0 L779.0 495.0 L776.0 494.0 L775.0 488.0Z"/><path d="M771.0 503.8 L776.0 506.3 L782.3 509.8 L781.5 511.5 L775.0 508.6 L770.5 505.3Z"/></g><g fill="none" stroke="#ffffff" stroke-width="0.75" stroke-linejoin="round" stroke-linecap="round"><path d="M707.9 494.8 L707.9 500.1 L699.2 505.6 L699.2 507.9"/><path d="M688.8 517.3 L693.8 517.3 L693.8 514.7 L695.1 513.9 L695.1 509.9 L699.2 509.9 L699.2 507.9"/><path d="M699.2 507.9 L704.0 511.5 L711.5 517.9 L715.0 520.5 L717.2 520.2 L724.9 513.9"/><path d="M695.1 527.0 L703.2 526.0 L703.2 524.5 L702.5 511.7"/><path d="M720.5 491.7 L721.8 503.1 L722.3 509.2 L722.5 511.5 L724.9 513.9"/><path d="M741.1 500.8 L741.1 516.2 L756.1 516.2"/><path d="M724.9 513.9 L728.7 514.7 L739.9 520.0 L739.9 519.3 L738.5 526.0 L737.4 530.0 L739.3 534.1"/><path d="M728.7 514.7 L729.3 518.5 L726.9 528.7"/><path d="M715.0 520.5 L715.0 524.7 L710.6 526.9"/><path d="M714.5 531.6 L718.7 529.7 L726.9 528.7"/><path d="M726.9 528.7 L724.9 537.7 L720.6 541.7"/><path d="M727.4 535.5 L733.7 535.5 L739.3 534.1"/><path d="M729.9 543.4 L737.4 542.4 L744.2 541.3"/><path d="M739.3 534.1 L743.6 534.6 L752.3 534.5"/><path d="M744.2 541.3 L748.4 543.4 L752.3 542.4"/><path d="M756.1 516.2 L757.9 522.3 L755.5 527.8 L753.3 534.1 L752.3 536.9 L751.1 541.3"/><path d="M753.6 541.8 L762.2 542.7"/><path d="M762.2 542.7 L764.8 541.4 L769.8 536.9 L763.9 531.9"/><path d="M762.2 542.7 L761.1 550.8 L752.3 549.8 L747.4 549.8 L746.7 554.8 L748.0 560.1"/><path d="M760.4 563.5 L753.0 564.9"/><path d="M725.2 557.0 L730.5 559.6 L737.4 564.2 L739.9 567.1 L745.5 560.6 L748.0 560.1"/><path d="M724.7 573.5 L736.0 574.5 L738.6 574.5 L741.4 574.2"/><path d="M734.9 580.6 L734.9 585.0 L734.9 590.9 L730.5 591.0"/><path d="M741.4 574.2 L744.9 571.5 L748.6 571.5 L751.1 573.0 L749.9 580.6"/><path d="M734.9 585.0 L741.8 586.1 L746.7 580.9 L749.9 580.6"/><path d="M689.5 525.0 L695.1 527.0"/><path d="M695.1 530.4 L700.0 533.3 L703.2 533.3 L706.5 532.6 L710.6 532.6 L712.5 531.3 L714.5 531.6"/><path d="M713.4 539.2 L714.5 531.6"/><path d="M706.3 541.3 L706.5 532.6"/><path d="M710.0 539.8 L710.6 532.6"/><path d="M699.4 542.0 L700.0 533.3"/><path d="M722.2 545.1 L729.9 545.5 L732.4 543.4"/><path d="M725.2 555.5 L729.9 552.7 L732.2 549.8 L732.4 543.4"/><path d="M737.4 564.2 L737.4 567.1 L737.4 574.2"/><path d="M698.9 482.4 L701.9 482.4 L701.3 486.9 L700.8 491.1"/><path d="M707.8 479.5 L714.0 481.5"/><path d="M713.1 463.5 L717.5 466.9 L720.0 467.9 L719.5 470.9 L718.5 474.3 L718.7 478.3"/><path d="M717.5 457.7 L717.5 461.7 L717.5 466.9"/><path d="M727.7 456.7 L728.4 463.5 L733.4 466.9 L738.0 467.9"/><path d="M724.9 465.1 L727.2 468.6 L726.1 471.2 L721.8 471.2 L727.1 473.3 L730.5 473.3 L733.7 474.3 L738.0 469.7"/><path d="M739.3 456.5 L739.6 462.4 L738.0 467.9 L738.0 470.1 L746.9 475.7"/><path d="M751.7 460.5 L759.8 466.9 L757.3 472.2"/><path d="M744.9 451.5 L749.2 458.9 L751.7 460.5"/><path d="M736.2 450.2 L744.5 447.6 L744.9 451.5 L739.3 456.5"/><path d="M744.9 410.6 L746.7 421.8 L747.4 434.8 L744.2 439.3"/><path d="M724.9 443.5 L725.6 436.3 L724.9 431.7 L728.7 421.8 L732.4 412.5 L735.5 410.6"/><path d="M739.9 422.5 L739.3 416.3 L735.5 410.6"/><path d="M738.0 477.9 L738.0 481.3 L735.5 484.1 L743.0 482.8"/><path d="M733.7 474.3 L734.3 481.3 L735.5 484.1"/><path d="M754.8 492.4 L762.3 491.1 L765.4 490.6 L764.8 486.9"/><path d="M759.8 479.3 L767.9 483.2 L770.4 482.6"/><path d="M762.3 491.1 L761.1 495.9 L758.6 499.6 L756.1 501.0 L753.6 504.3"/><path d="M758.6 499.6 L765.4 505.1 L769.8 505.3"/><path d="M765.4 490.6 L766.7 495.0 L769.2 498.5 L770.4 503.5"/><path d="M763.6 523.8 L768.5 523.8 L774.8 520.8 L779.2 515.4 L779.7 512.3"/><path d="M786.0 492.4 L785.7 495.9 L786.6 501.0 L788.5 504.3 L786.6 511.5"/><path d="M799.0 492.4 L796.6 496.7 L797.2 500.1 L792.8 504.3 L788.5 504.3"/><path d="M776.0 482.2 L779.7 483.6 L784.7 477.3 L789.7 478.9 L794.7 484.1 L798.4 481.3 L802.2 479.9 L809.6 480.7 L810.3 476.3 L813.4 472.2 L816.5 472.2 L819.0 467.9"/><path d="M768.5 474.3 L770.4 472.2 L768.5 466.9 L773.5 463.5 L778.5 464.6 L786.0 463.5 L786.0 456.5 L794.7 453.3 L800.9 456.5 L804.7 456.0 L805.9 461.2 L813.4 463.5 L819.0 467.9"/><path d="M819.0 467.9 L824.6 464.6 L832.0 461.2 L837.0 462.4 L843.3 465.3 L850.7 466.2 L855.1 466.2"/><path d="M819.0 467.9 L823.3 476.3 L829.6 480.9 L840.8 483.2 L848.2 479.3 L859.4 473.3 L855.1 466.2"/><path d="M855.1 466.2 L859.4 460.0 L866.9 458.9 L873.1 470.5 L878.1 469.0 L873.1 480.3 L872.5 481.3"/><path d="M864.8 486.0 L870.7 481.6 L872.5 481.3"/><path d="M809.6 480.7 L803.4 486.0 L802.8 491.5 L803.4 495.0 L807.1 494.1 L808.4 499.3 L810.9 503.5 L819.6 507.1 L824.6 507.1 L830.8 506.4 L832.7 511.5 L832.0 513.1 L835.8 517.0 L839.5 515.4 L844.5 517.0"/><path d="M802.8 491.5 L802.2 498.5 L802.8 501.8 L798.4 506.7 L797.2 509.9 L795.1 513.4"/><path d="M809.6 505.4 L819.6 509.2 L820.2 516.2"/><path d="M825.2 517.7 L824.6 512.3 L821.5 509.9"/><path d="M832.0 513.1 L834.5 518.5 L832.7 523.8 L833.3 534.1"/><path d="M837.0 515.4 L840.1 519.3 L842.6 523.8 L843.9 527.5 L842.0 531.9"/><path d="M836.4 526.7 L837.7 531.1"/><path d="M834.5 539.1 L837.0 539.8"/><path d="M782.2 483.2 L784.7 489.7 L792.2 490.6 L799.0 492.4"/><path d="M620.0 531.6 L619.7 538.1 L625.9 539.5 L625.6 545.5"/><path d="M634.3 536.2 L633.4 542.7 L629.7 542.7 L625.6 545.5"/><path d="M639.0 539.8 L639.0 545.5"/><path d="M642.7 540.3 L642.7 545.5"/><path d="M625.6 545.5 L623.4 547.0 L622.8 554.1 L619.1 559.1 L619.7 562.7 L623.4 564.2 L628.7 562.5 L635.3 567.8 L637.8 573.0 L638.4 580.6 L640.9 582.9 L642.1 586.2"/><path d="M611.6 546.5 L616.6 548.7 L622.8 554.1"/><path d="M610.1 553.3 L612.9 553.0 L616.0 550.5"/><path d="M623.4 564.2 L624.1 570.8 L622.3 575.0"/><path d="M623.4 573.8 L624.7 581.8 L632.2 580.9 L637.8 577.5"/><path d="M624.7 581.8 L622.8 593.3"/><path d="M632.2 580.9 L637.8 588.4 L642.1 586.2"/><path d="M564.2 499.3 L567.2 499.0 L571.8 501.3 L575.2 501.3 L577.5 500.5 L581.7 505.1 L583.6 503.8 L588.6 510.1"/><path d="M595.2 527.5 L595.4 522.6 L598.9 522.6 L600.0 521.5"/><path d="M598.9 522.6 L599.8 525.6"/><path d="M601.0 529.0 L604.1 527.5 L606.3 526.7"/><path d="M603.3 532.6 L605.9 532.6"/><path d="M606.8 536.2 L606.8 534.8"/><path d="M591.4 467.9 L598.5 470.1 L604.8 473.3 L607.3 482.2 L611.6 479.9 L615.3 477.9 L617.0 476.3 L621.0 476.3 L622.8 473.3 L624.1 471.6 L625.6 472.2 L626.6 476.3"/><path d="M870.7 569.9 L870.7 595.8"/><path d="M881.9 572.3 L881.9 586.9 L885.6 586.9 L885.6 591.7"/></g><g fill="#ffffff" stroke="#fff" stroke-width="0.6"><path d="M595.4 472.8 L600.4 470.1 L604.4 472.4 L604.1 469.7 L599.2 469.0Z"/><path d="M601.0 482.8 L602.5 479.3 L603.1 474.9 L600.7 477.3Z"/><path d="M605.4 474.3 L609.7 476.3 L607.3 480.3 L606.3 476.3Z"/><path d="M606.3 482.8 L611.7 480.5 L610.4 480.9Z"/><path d="M611.0 479.7 L615.1 479.1 L614.1 478.3Z"/></g><g fill="none" stroke="#ffffff" stroke-width="0.75"><path d="M534.4 411 V441.3 L541 444 L547 452 L551 462"/><path d="M556 468.8 H592.5"/><path d="M753 499.5 L757 506 L762 514.5 L767 522 L769.5 527" stroke-width="1.6"/></g></svg><div class="a" style="left:464px;top:368px;width:525px;height:221px;overflow:hidden;"><div class="a" style="left:183.7px;top:0.7px;width:19px;height:19px;border-radius:50%;background:#f4a020;box-shadow:0 0 0 1px rgba(170,205,230,0.7);"></div><div class="t " style="left:178.20px;width:30px;text-align:center;top:7.86px;font-size:5.6px;line-height:5.6px;color:#ffffff;font-weight:bold;">1M</div><div class="a" style="left:116.3px;top:23.9px;width:19px;height:19px;border-radius:50%;background:#f04549;box-shadow:0 0 0 1px rgba(170,205,230,0.7);"></div><div class="t " style="left:110.80px;width:30px;text-align:center;top:31.06px;font-size:5.6px;line-height:5.6px;color:#ffffff;font-weight:bold;">10M</div><div class="a" style="left:89.4px;top:84.1px;width:19px;height:19px;border-radius:50%;background:#f04549;box-shadow:0 0 0 1px rgba(170,205,230,0.7);"></div><div class="t " style="left:83.90px;width:30px;text-align:center;top:91.26px;font-size:5.6px;line-height:5.6px;color:#ffffff;font-weight:bold;">1S</div><div class="a" style="left:233.6px;top:78.9px;width:19px;height:19px;border-radius:50%;background:#f4a020;box-shadow:0 0 0 1px rgba(170,205,230,0.7);"></div><div class="t " style="left:228.10px;width:30px;text-align:center;top:86.06px;font-size:5.6px;line-height:5.6px;color:#ffffff;font-weight:bold;">1B</div><div class="a" style="left:368.9px;top:34.6px;width:19px;height:19px;border-radius:50%;background:#f4a020;box-shadow:0 0 0 1px rgba(170,205,230,0.7);"></div><div class="t " style="left:363.40px;width:30px;text-align:center;top:41.76px;font-size:5.6px;line-height:5.6px;color:#ffffff;font-weight:bold;">1K</div><div class="a" style="left:280.9px;top:124.1px;width:19px;height:19px;border-radius:50%;background:#6ab068;box-shadow:0 0 0 1px rgba(170,205,230,0.7);"></div><div class="t " style="left:275.40px;width:30px;text-align:center;top:131.26px;font-size:5.6px;line-height:5.6px;color:#ffffff;font-weight:bold;">10S</div><div class="a" style="left:368.2px;top:113.0px;width:19px;height:19px;border-radius:50%;background:#f04549;box-shadow:0 0 0 1px rgba(170,205,230,0.7);"></div><div class="t " style="left:362.70px;width:30px;text-align:center;top:120.16px;font-size:5.6px;line-height:5.6px;color:#ffffff;font-weight:bold;">10K</div><div class="a" style="left:169.0px;top:192.1px;width:19px;height:19px;border-radius:50%;background:#6ab068;box-shadow:0 0 0 1px rgba(170,205,230,0.7);"></div><div class="t " style="left:163.50px;width:30px;text-align:center;top:199.26px;font-size:5.6px;line-height:5.6px;color:#ffffff;font-weight:bold;">100M</div><div class="a" style="left:404.0px;top:211.2px;width:19px;height:19px;border-radius:50%;background:#6ab068;box-shadow:0 0 0 1px rgba(170,205,230,0.7);"></div><div class="t " style="left:398.50px;width:30px;text-align:center;top:218.36px;font-size:5.6px;line-height:5.6px;color:#ffffff;font-weight:bold;">100M</div></div><div class="a" style="left:467.2px;top:372.9px;width:13.6px;height:13.6px;border-radius:50%;border:1px solid #dfe1e6;background:#fff;box-sizing:border-box;"></div><div class="a" style="left:467.2px;top:391.5px;width:13.6px;height:13.6px;border-radius:50%;border:1px solid #dfe1e6;background:#fff;box-sizing:border-box;"></div><div class="a" style="left:467.2px;top:410.0px;width:13.6px;height:13.6px;border-radius:50%;border:1px solid #dfe1e6;background:#fff;box-sizing:border-box;"></div><svg class="a" style="left:470px;top:375.7px" width="9" height="9" viewBox="0 0 9 9" fill="#4a5566"><path d="M4.5 0.3 L6.2 2.5 H2.8Z M4.5 8.7 L6.2 6.5 H2.8Z M0.3 4.5 L2.5 2.8 V6.2Z M8.7 4.5 L6.5 2.8 V6.2Z"/><rect x="2.5" y="2.5" width="4" height="4"/></svg><div class="a" style="left:471.3px;top:398.3px;width:6.4px;height:1.1px;background:#4a5566;"></div><div class="a" style="left:473.95px;top:395.6px;width:1.1px;height:6.4px;background:#4a5566;"></div><div class="a" style="left:471px;top:416.8px;width:7px;height:1.2px;background:#4a5566;"></div><div class="a" style="left:464px;top:589px;width:525px;height:9px;background:#f4f3f8;"></div><div class="a" style="left:740px;top:403.5px;width:95px;height:77px;background:#fff;box-shadow:0 1px 4px rgba(0,0,0,0.35);"></div><div class="a" style="left:740px;top:403.5px;width:95px;height:13.6px;background:#1f2a3e;"></div><div class="t " style="left:744.80px;top:407.94px;font-size:6.45px;line-height:6.45px;color:#ffffff;font-weight:normal;-webkit-text-stroke:0.3px #fff;">10,005 Alerts from China</div><svg class="a" style="left:825.3px;top:408px" width="5" height="5" viewBox="0 0 5 5" stroke="#e8eaf0" stroke-width="0.8"><path d="M0.3 0.3 L4.7 4.7 M4.7 0.3 L0.3 4.7"/></svg><div class="a" style="left:744.8px;top:422px;width:5px;height:5px;background:#3da33d;"></div><div class="t " style="left:752.30px;top:421.54px;font-size:6.8px;line-height:6.8px;color:#3a4556;font-weight:normal;">Low</div><div class="t " style="left:790.30px;width:40px;text-align:right;top:421.88px;font-size:6.4px;line-height:6.4px;color:#3a4556;font-weight:normal;">0</div><div class="a" style="left:744.8px;top:437px;width:5px;height:5px;background:#f0961a;"></div><div class="t " style="left:752.30px;top:435.94px;font-size:6.8px;line-height:6.8px;color:#3a4556;font-weight:normal;">Medium</div><div class="t " style="left:790.30px;width:40px;text-align:right;top:436.28px;font-size:6.4px;line-height:6.4px;color:#3a4556;font-weight:normal;">0</div><div class="a" style="left:744.8px;top:451px;width:5px;height:5px;background:#ee2f2f;"></div><div class="t " style="left:752.30px;top:450.54px;font-size:6.8px;line-height:6.8px;color:#3a4556;font-weight:normal;">High</div><div class="t " style="left:790.30px;width:40px;text-align:right;top:450.88px;font-size:6.4px;line-height:6.4px;color:#3a4556;font-weight:normal;">10,005</div><div class="a" style="left:744.8px;top:431px;width:85.5px;height:1px;background:#e7e8ec;"></div><div class="a" style="left:744.8px;top:446px;width:85.5px;height:1px;background:#e7e8ec;"></div><div class="a" style="left:744.8px;top:461px;width:85.5px;height:1px;background:#e7e8ec;"></div><div class="t " style="left:744.80px;top:467.98px;font-size:6.4px;line-height:6.4px;color:#2a9de0;font-weight:normal;text-decoration:underline;-webkit-text-stroke:0.15px #2a9de0;">See all alerts from China</div>
</body></html>
